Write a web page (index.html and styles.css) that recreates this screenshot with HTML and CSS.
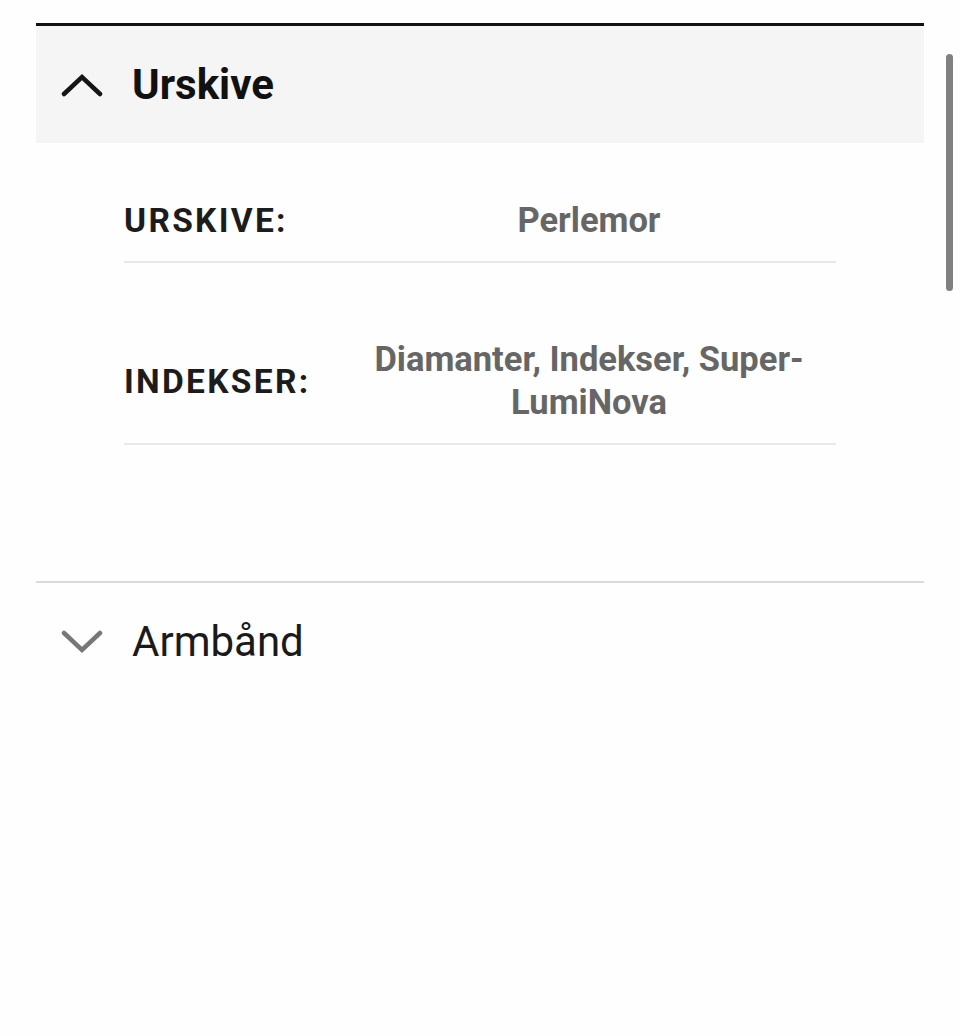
FILE: index.html
```html
<!DOCTYPE html>
<html lang="da">
<head>
<meta charset="utf-8">
<title>Urskive</title>
<link rel="stylesheet" href="styles.css">
</head>
<body>
<div class="page">
  <section class="acc acc-open">
    <div class="acc-head">
      <svg class="chev" width="42" height="26" viewBox="0 0 42 26"><path d="M3 22 L21 5 L39 22" fill="none" stroke="#151515" stroke-width="4.5" stroke-linecap="round" stroke-linejoin="miter"/></svg>
      <h2 class="acc-title bold">Urskive</h2>
    </div>
    <div class="acc-body">
      <div class="row">
        <div class="label">URSKIVE:</div>
        <div class="value">Perlemor</div>
      </div>
      <div class="row">
        <div class="label">INDEKSER:</div>
        <div class="value">Diamanter, Indekser, Super-LumiNova</div>
      </div>
    </div>
  </section>
  <section class="acc">
    <div class="acc-head plain">
      <svg class="chev" width="42" height="26" viewBox="0 0 42 26"><path d="M3 4 L21 21 L39 4" fill="none" stroke="#777777" stroke-width="4.5" stroke-linecap="round" stroke-linejoin="miter"/></svg>
      <h2 class="acc-title">Armbånd</h2>
    </div>
  </section>
</div>
<div class="scrollbar"></div>
</body>
</html>
```
FILE: styles.css
```css
html, body {
  margin: 0;
  padding: 0;
  background: #fefefe;
}
body {
  font-family: Roboto, "Noto Sans", "Liberation Sans", sans-serif;
  color: #1a1a1a;
}
.page {
  margin: 0 36px;
  padding-top: 23px;
}
.acc-open {
  border-top: 3px solid #111;
  border-bottom: 2px solid #d9d9d9;
}
.acc-head {
  height: 117px;
  display: flex;
  align-items: center;
  padding-left: 25px;
  background: #f5f5f5;
}
.acc-head.plain {
  background: transparent;
}
.chev {
  display: block;
  flex: none;
}
.acc-title {
  margin: 0 0 0 29px;
  font-size: 42px;
  font-weight: 400;
  color: #1a1a1a;
  line-height: 1;
}
.acc-title.bold {
  font-weight: 700;
  color: #111;
}
.acc-body {
  padding: 37px 88px 136px;
  display: flex;
  flex-direction: column;
  gap: 56px;
}
.row {
  display: flex;
  align-items: center;
  padding: 19px 0;
  border-bottom: 2px solid #e8e8e8;
}
.label {
  width: 218px;
  flex: none;
  font-size: 33.5px;
  font-weight: 700;
  letter-spacing: 2.3px;
  color: #1c1c1c;
  line-height: 43px;
}
.value {
  flex: 1;
  text-align: center;
  font-size: 34.5px;
  font-weight: 700;
  color: #666;
  line-height: 43px;
}
.scrollbar {
  position: absolute;
  left: 946px;
  top: 54px;
  width: 7px;
  height: 237px;
  border-radius: 4px;
  background: #808080;
}
```
